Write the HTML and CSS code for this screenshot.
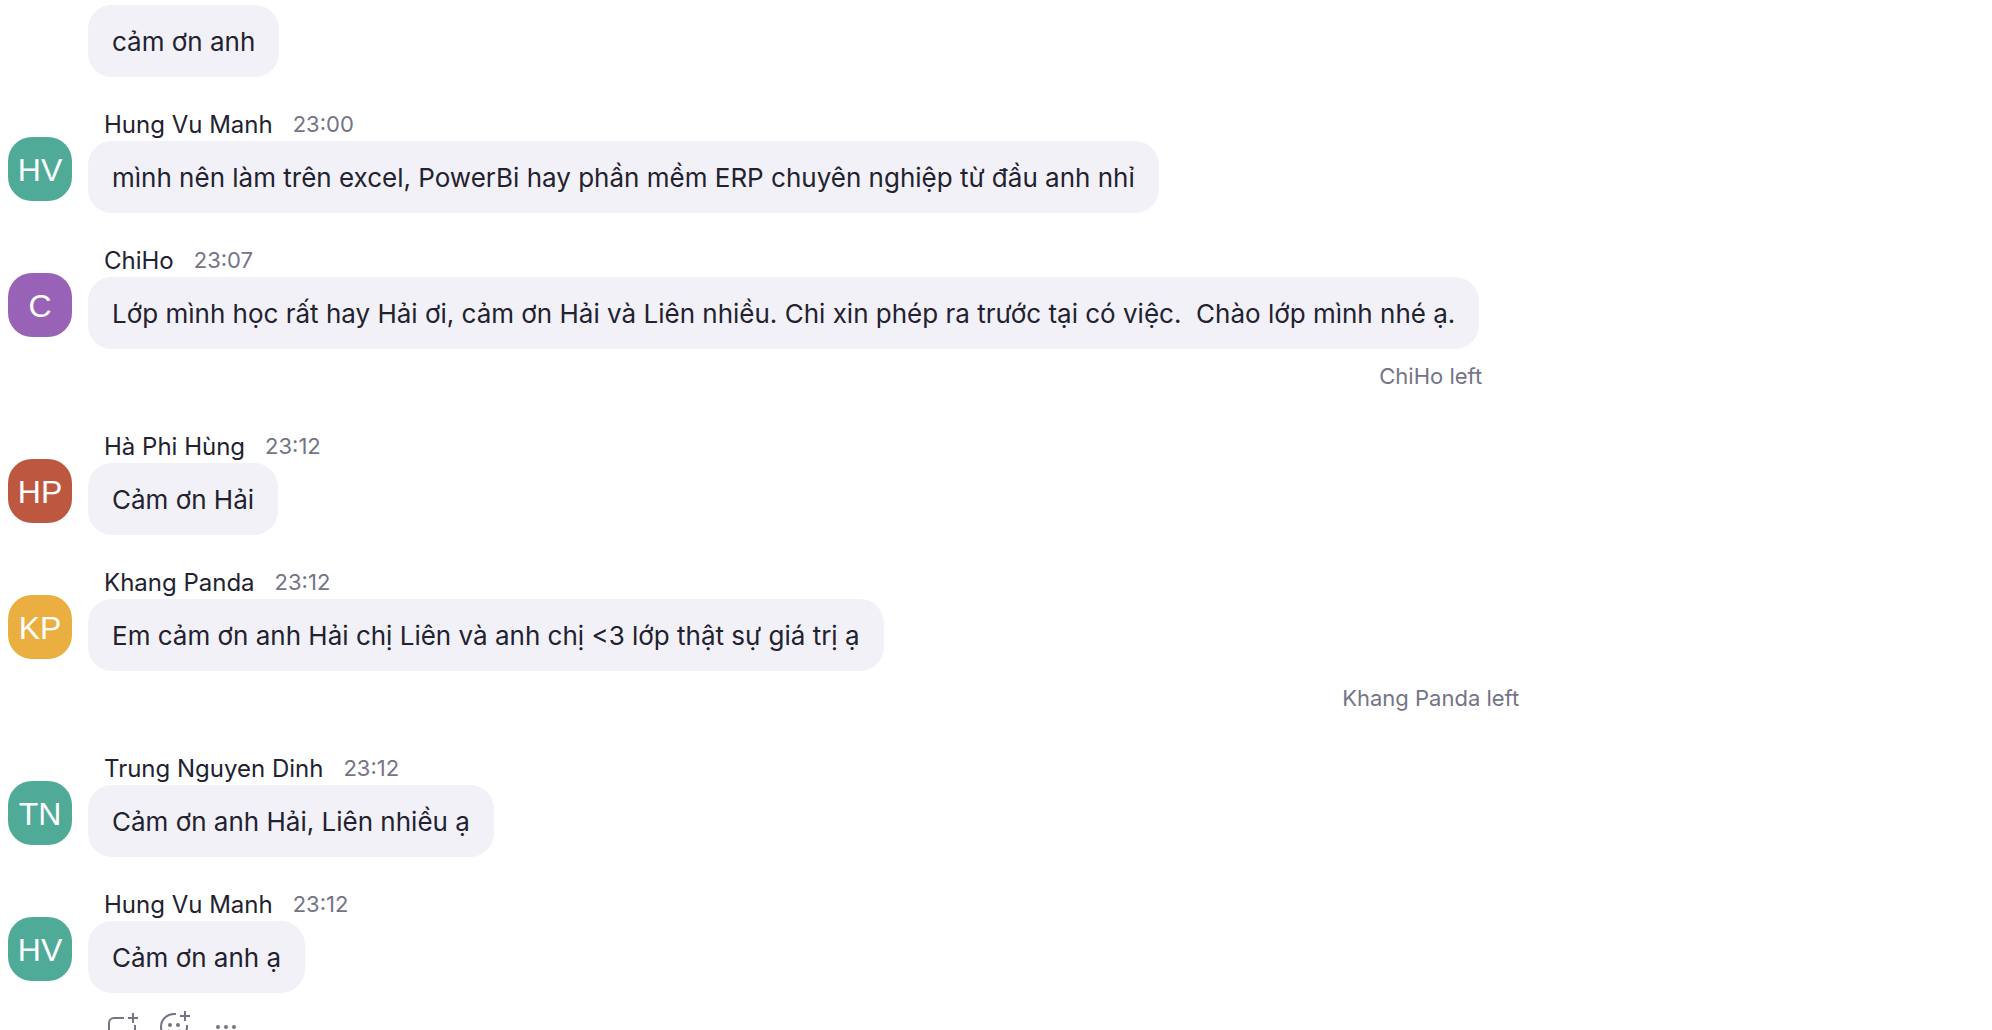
FILE: index.html
```html
<!DOCTYPE html>
<html lang="vi">
<head>
    <meta charset="UTF-8">
    <meta name="viewport" content="width=device-width, initial-scale=1.0">
    <title>Meeting Chat</title>
    <link rel="stylesheet" href="styles.css">
</head>
<body>
    <main class="chat">
        <article class="message">
            <p class="bubble">cảm ơn anh</p>
        </article>

        <article class="message">
            <div class="avatar green">HV</div>
            <header class="message-header">
                <span class="name">Hung Vu Manh</span>
                <time class="time">23:00</time>
            </header>
            <p class="bubble">mình nên làm trên excel, PowerBi hay phần mềm ERP chuyên nghiệp từ đầu anh nhỉ</p>
        </article>

        <article class="message">
            <div class="avatar purple">C</div>
            <header class="message-header">
                <span class="name">ChiHo</span>
                <time class="time">23:07</time>
            </header>
            <p class="bubble">Lớp mình học rất hay Hải ơi, cảm ơn Hải và Liên nhiều. Chi xin phép ra trước tại có việc.&nbsp; Chào lớp mình nhé ạ.</p>
        </article>
        <p class="notice">ChiHo left</p>

        <article class="message">
            <div class="avatar red">HP</div>
            <header class="message-header">
                <span class="name">Hà Phi Hùng</span>
                <time class="time">23:12</time>
            </header>
            <p class="bubble">Cảm ơn Hải</p>
        </article>

        <article class="message">
            <div class="avatar yellow">KP</div>
            <header class="message-header">
                <span class="name">Khang Panda</span>
                <time class="time">23:12</time>
            </header>
            <p class="bubble">Em cảm ơn anh Hải chị Liên và anh chị &lt;3 lớp thật sự giá trị ạ</p>
        </article>
        <p class="notice">Khang Panda left</p>

        <article class="message">
            <div class="avatar green">TN</div>
            <header class="message-header">
                <span class="name">Trung Nguyen Dinh</span>
                <time class="time">23:12</time>
            </header>
            <p class="bubble">Cảm ơn anh Hải, Liên nhiều ạ</p>
        </article>

        <article class="message">
            <div class="avatar green">HV</div>
            <header class="message-header">
                <span class="name">Hung Vu Manh</span>
                <time class="time">23:12</time>
            </header>
            <p class="bubble">Cảm ơn anh ạ</p>
        </article>

        <div class="actions">
            <button type="button" class="action-btn" aria-label="Reply">
                <svg viewBox="0 0 32 32">
                    <path d="M18 7H8a5 5 0 0 0-5 5v11a4 4 0 0 0 4 4h3v4l5-4h10a4 4 0 0 0 4-4V14M27 2v10M22 7h10"/>
                </svg>
            </button>
            <button type="button" class="action-btn" aria-label="Add reaction">
                <svg viewBox="0 0 32 32">
                    <path d="M18 3H16A13 13 0 1 0 29 16V14M27 0v10M22 5h10M10 19q6 7 12 0"/>
                    <circle class="dot" cx="12" cy="14" r="2"/>
                    <circle class="dot" cx="20" cy="14" r="2"/>
                </svg>
            </button>
            <button type="button" class="action-btn" aria-label="More">
                <svg viewBox="0 0 32 32">
                    <circle class="dot" cx="8" cy="16" r="2"/>
                    <circle class="dot" cx="16" cy="16" r="2"/>
                    <circle class="dot" cx="24" cy="16" r="2"/>
                </svg>
            </button>
        </div>
    </main>
</body>
</html>
```

FILE: styles.css
```css
* {
    margin: 0;
    padding: 0;
    box-sizing: border-box;
}

body {
    height: 100vh;
    overflow: hidden;
    background: #fff;
    color: #222230;
    font-family: 'Inter', 'Noto Sans', sans-serif;
}

.chat {
    padding: 5px 8px 0;
}

.message {
    display: grid;
    grid-template-columns: 64px 1fr;
    column-gap: 16px;
    margin-bottom: 28px;
}

.message-header {
    grid-column: 2;
    display: flex;
    align-items: center;
    gap: 20px;
    height: 36px;
    padding: 2px 0 0 16px;
    white-space: nowrap;
}

.name {
    font-size: 24px;
}

.time {
    font-size: 22px;
    color: #747487;
}

.avatar {
    grid-row: 1 / 3;
    align-self: end;
    width: 64px;
    height: 64px;
    margin-bottom: 12px;
    border-radius: 24px;
    color: #fff;
    font-family: 'Liberation Sans', Arial, sans-serif;
    font-size: 32px;
    line-height: 66px;
    text-align: center;
}

.green {
    background: #4fab98;
}

.purple {
    background: #9862b6;
}

.red {
    background: #be5740;
}

.yellow {
    background: #eaae41;
}

.bubble {
    grid-column: 2;
    justify-self: start;
    padding: 21px 24px 19px;
    border-radius: 24px;
    background: #f2f1f7;
    font-size: 26px;
    line-height: 32px;
}

.notice {
    margin: -28px 0 24px 44%;
    color: #747487;
    font-size: 22px;
    line-height: 54px;
    text-align: center;
}

.actions {
    display: flex;
    gap: 20px;
    margin-top: -10px;
    padding-left: 98px;
}

.action-btn {
    width: 32px;
    height: 32px;
    border: none;
    background: none;
    cursor: pointer;
}

.action-btn svg {
    display: block;
    fill: none;
    stroke: #747487;
    stroke-width: 2;
}

.action-btn .dot {
    fill: #747487;
    stroke: none;
}
```
